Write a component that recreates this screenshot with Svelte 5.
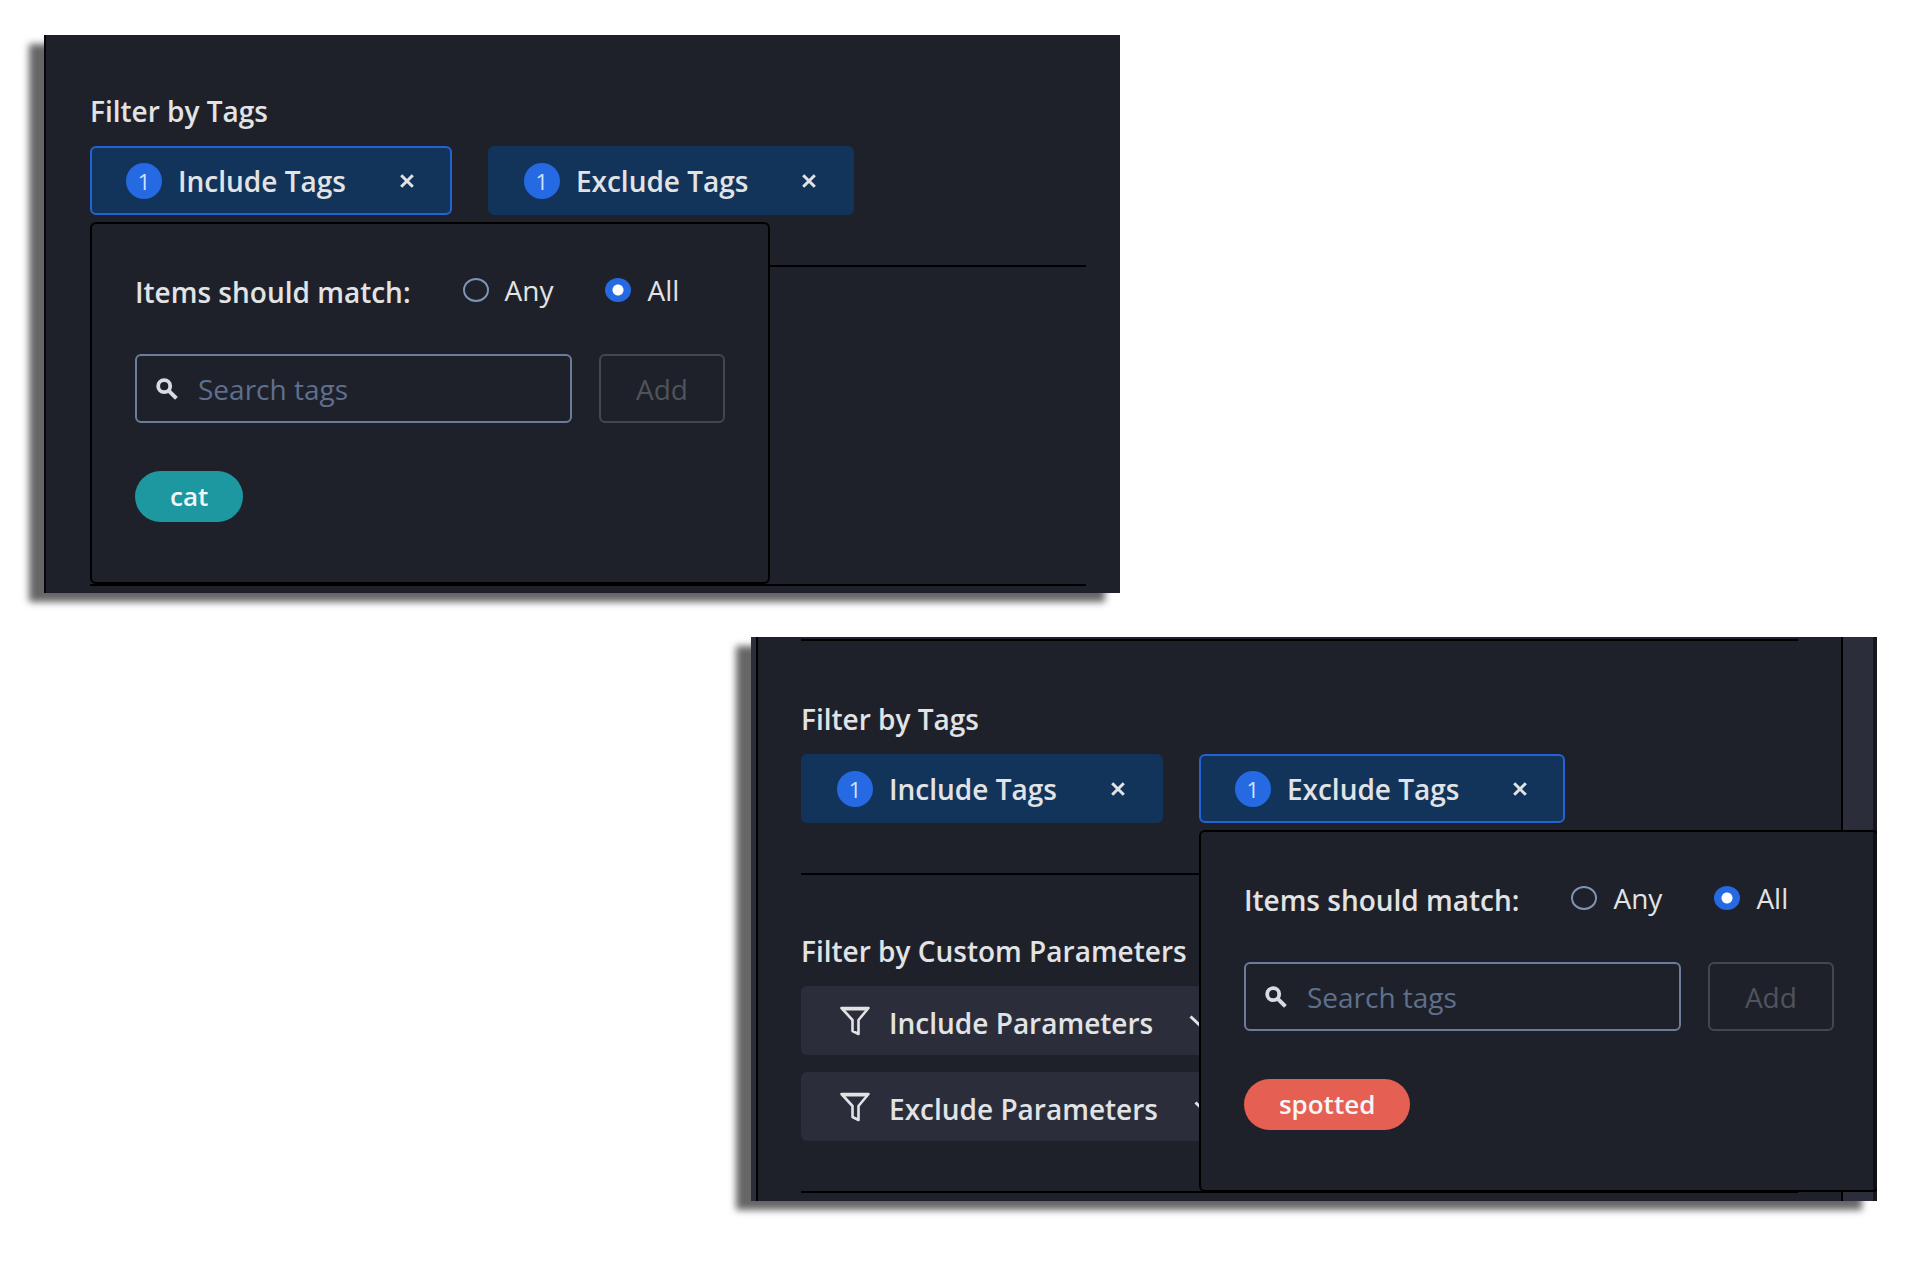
<script>
	let includeMatch = $state('all');
	let excludeMatch = $state('all');

	const matchOptions = [
		{ value: 'any', label: 'Any' },
		{ value: 'all', label: 'All' }
	];
	const parameterFilters = ['Include Parameters', 'Exclude Parameters'];
</script>

{#snippet tagFilter(label, count, active)}
	<div class="tag-filter" class:active>
		<button class="tag-toggle" type="button" aria-expanded={active}>
			<span class="badge">{count}</span>
			<span>{label}</span>
		</button>
		<button class="tag-clear" type="button" aria-label="Clear {label}">
			<svg viewBox="0 0 14 14" width="14" height="14">
				<path d="M1.2 1.2 12.8 12.8M12.8 1.2 1.2 12.8" stroke="currentColor" stroke-width="3" fill="none" />
			</svg>
		</button>
	</div>
{/snippet}

{#snippet popupBody(id, tag, tone)}
	<div class="search-row">
		<div class="search">
			<svg class="search-icon" viewBox="0 0 22 22" width="22" height="22">
				<circle cx="8.2" cy="8.2" r="6" fill="none" stroke="currentColor" stroke-width="3.8" />
				<path d="M12.6 12.6 20.4 20.4" stroke="currentColor" stroke-width="4" />
			</svg>
			<input type="text" id="{id}-search" placeholder="Search tags" aria-label="Search tags" />
		</div>
		<button class="add" type="button" disabled>Add</button>
	</div>
	<span class="tag {tone}">{tag}</span>
{/snippet}

<main class="page">
	<section class="panel panel-include">
		<div class="group">
			<h2>Filter by Tags</h2>
			<div class="filters">
				<div class="anchor">
					{@render tagFilter('Include Tags', 1, true)}
					<div class="popup">
						<div class="match" role="radiogroup" aria-labelledby="include-label">
							<span class="match-label" id="include-label">Items should match:</span>
							{#each matchOptions as option}
								<label class="option">
									<input type="radio" name="include-match" value={option.value} bind:group={includeMatch} />
									{option.label}
								</label>
							{/each}
						</div>
						{@render popupBody('include', 'cat', 'teal')}
					</div>
				</div>
				{@render tagFilter('Exclude Tags', 1, false)}
			</div>
		</div>
		<div class="group spacer"></div>
	</section>

	<section class="panel panel-exclude">
		<div class="sidebar">
			<div class="group first">
				<h2>Filter by Tags</h2>
				<div class="filters">
					{@render tagFilter('Include Tags', 1, false)}
					<div class="anchor">
						{@render tagFilter('Exclude Tags', 1, true)}
						<div class="popup">
							<div class="match" role="radiogroup" aria-labelledby="exclude-label">
								<span class="match-label" id="exclude-label">Items should match:</span>
								{#each matchOptions as option}
									<label class="option">
										<input type="radio" name="exclude-match" value={option.value} bind:group={excludeMatch} />
										{option.label}
									</label>
								{/each}
							</div>
							{@render popupBody('exclude', 'spotted', 'red')}
						</div>
					</div>
				</div>
			</div>
			<div class="group">
				<h2>Filter by Custom Parameters</h2>
				<div class="parameters">
					{#each parameterFilters as label}
						<button class="parameter" type="button">
							<svg viewBox="0 0 32 32" width="32" height="32">
								<path
									d="M2.5 3H29.5L19.5 15V29L13.5 26V15Z"
									fill="none"
									stroke="currentColor"
									stroke-width="2.6"
									stroke-linejoin="round"
								/>
								<path d="M3 4H29" stroke="currentColor" stroke-width="3" />
							</svg>
							<span class="parameter-label">{label}</span>
							<svg viewBox="0 0 20 12" width="20" height="12">
								<path d="M1.5 1.5 10 9.5 18.5 1.5" fill="none" stroke="currentColor" stroke-width="3" />
							</svg>
						</button>
					{/each}
				</div>
			</div>
		</div>
	</section>
</main>

<style>
	:global(body) {
		background: #fff;
	}

	.page {
		display: grid;
		grid-template-columns: 707fr 369fr 757fr;
		row-gap: 44px;
		padding: 35px 47px 60px 44px;
		font-family: 'Open Sans', 'Noto Sans', sans-serif;
		font-size: 28px;
		font-weight: 600;
		line-height: 40px;
		color: #e2e3e5;
	}

	button,
	input {
		font: inherit;
		color: inherit;
	}

	button {
		padding: 0;
		border: 0;
		background: none;
		cursor: pointer;
	}

	svg {
		display: block;
		flex: none;
	}

	.panel {
		box-sizing: border-box;
		min-width: 0;
		background: #1e2129;
		box-shadow: -15px 9px 7px rgba(0, 0, 0, 0.6);
	}

	.panel-include {
		grid-column: 1 / 3;
		padding: 0 34px 7px 44px;
		border-left: 2px solid #050608;
	}

	/* The strips either side are the page behind the sidebar */
	.panel-exclude {
		position: relative;
		grid-column: 2 / 4;
		grid-row: 2;
		padding: 0 34px 0 5px;
		background: #2b2e3a;
		overflow: hidden;
	}

	.panel-exclude::after {
		content: '';
		position: absolute;
		inset: 0 0 0 auto;
		z-index: 2;
		width: 4px;
		background: rgba(0, 0, 0, 0.5);
	}

	.sidebar {
		padding: 2px 43px 8px;
		border: solid #000;
		border-width: 0 2px;
		background: #1e2129;
	}

	.group {
		padding: 56px 0 50px;
		border-bottom: 2px solid #000;
	}

	.group.first {
		padding-top: 58px;
		border-top: 2px solid #000;
	}

	.spacer {
		height: 211px;
	}

	h2 {
		margin: 0 0 15px;
		font-size: inherit;
		font-weight: inherit;
		white-space: nowrap;
	}

	.filters {
		display: flex;
		gap: 36px;
	}

	.anchor {
		position: relative;
	}

	.tag-filter {
		display: flex;
		box-sizing: border-box;
		height: 69px;
		border: 2px solid #12345b;
		border-radius: 6px;
		background: #12345b;
		white-space: nowrap;
	}

	.tag-filter.active {
		border-color: #2264d6;
	}

	.tag-toggle {
		display: flex;
		align-items: center;
		gap: 16px;
		padding-left: 34px;
	}

	.badge {
		width: 36px;
		height: 36px;
		border-radius: 50%;
		background: #256ae2;
		font-size: 22px;
		font-weight: 400;
		line-height: 36px;
		text-align: center;
		color: #cfe3ff;
	}

	.tag-clear {
		padding: 0 36px 0 54px;
	}

	.popup {
		position: absolute;
		top: 76px;
		left: 0;
		z-index: 1;
		box-sizing: border-box;
		width: 680px;
		padding: 48px 43px 60px;
		border: 2px solid #000;
		border-radius: 6px;
		background: #1e2129;
	}

	.match {
		display: flex;
		align-items: flex-start;
		gap: 52px;
		margin-bottom: 42px;
		white-space: nowrap;
	}

	.option {
		display: flex;
		align-items: center;
		gap: 16px;
		font-weight: 400;
		line-height: 36px;
	}

	.option input {
		appearance: none;
		width: 26px;
		height: 24px;
		margin: 0;
		border: 2px solid #7f93b5;
		border-radius: 50%;
	}

	.option input:checked {
		border-color: #256ae2;
		background: radial-gradient(circle, #fff 5px, #256ae2 6px);
	}

	.search-row {
		display: flex;
		gap: 27px;
		margin-bottom: 48px;
	}

	.search {
		display: flex;
		flex: 1;
		align-items: center;
		gap: 20px;
		box-sizing: border-box;
		height: 69px;
		padding: 0 19px;
		border: 2px solid #6c7d9c;
		border-radius: 6px;
	}

	.search-icon {
		color: #d7dce3;
	}

	.search input {
		flex: 1;
		min-width: 0;
		padding: 0;
		border: 0;
		outline: 0;
		background: none;
		font-weight: 400;
	}

	.search input::placeholder {
		color: #5f6f8e;
		opacity: 1;
	}

	.add {
		width: 126px;
		border: 2px solid #43474f;
		border-radius: 6px;
		font-weight: 400;
		color: #4f535b;
		cursor: default;
	}

	.tag {
		display: block;
		width: fit-content;
		padding: 0 35px;
		border-radius: 26px;
		font-size: 26px;
		line-height: 51px;
		color: #f4f6f7;
	}

	.teal {
		background: #1d98a1;
	}

	.red {
		background: #e65f53;
	}

	.parameters {
		display: flex;
		flex-direction: column;
		align-items: flex-start;
		gap: 17px;
	}

	.parameter {
		display: flex;
		align-items: center;
		height: 69px;
		padding: 0 36px 0 38px;
		border-radius: 6px;
		background: #2b2e3a;
		white-space: nowrap;
	}

	.parameter-label {
		padding: 4px 36px 0 18px;
	}
</style>
